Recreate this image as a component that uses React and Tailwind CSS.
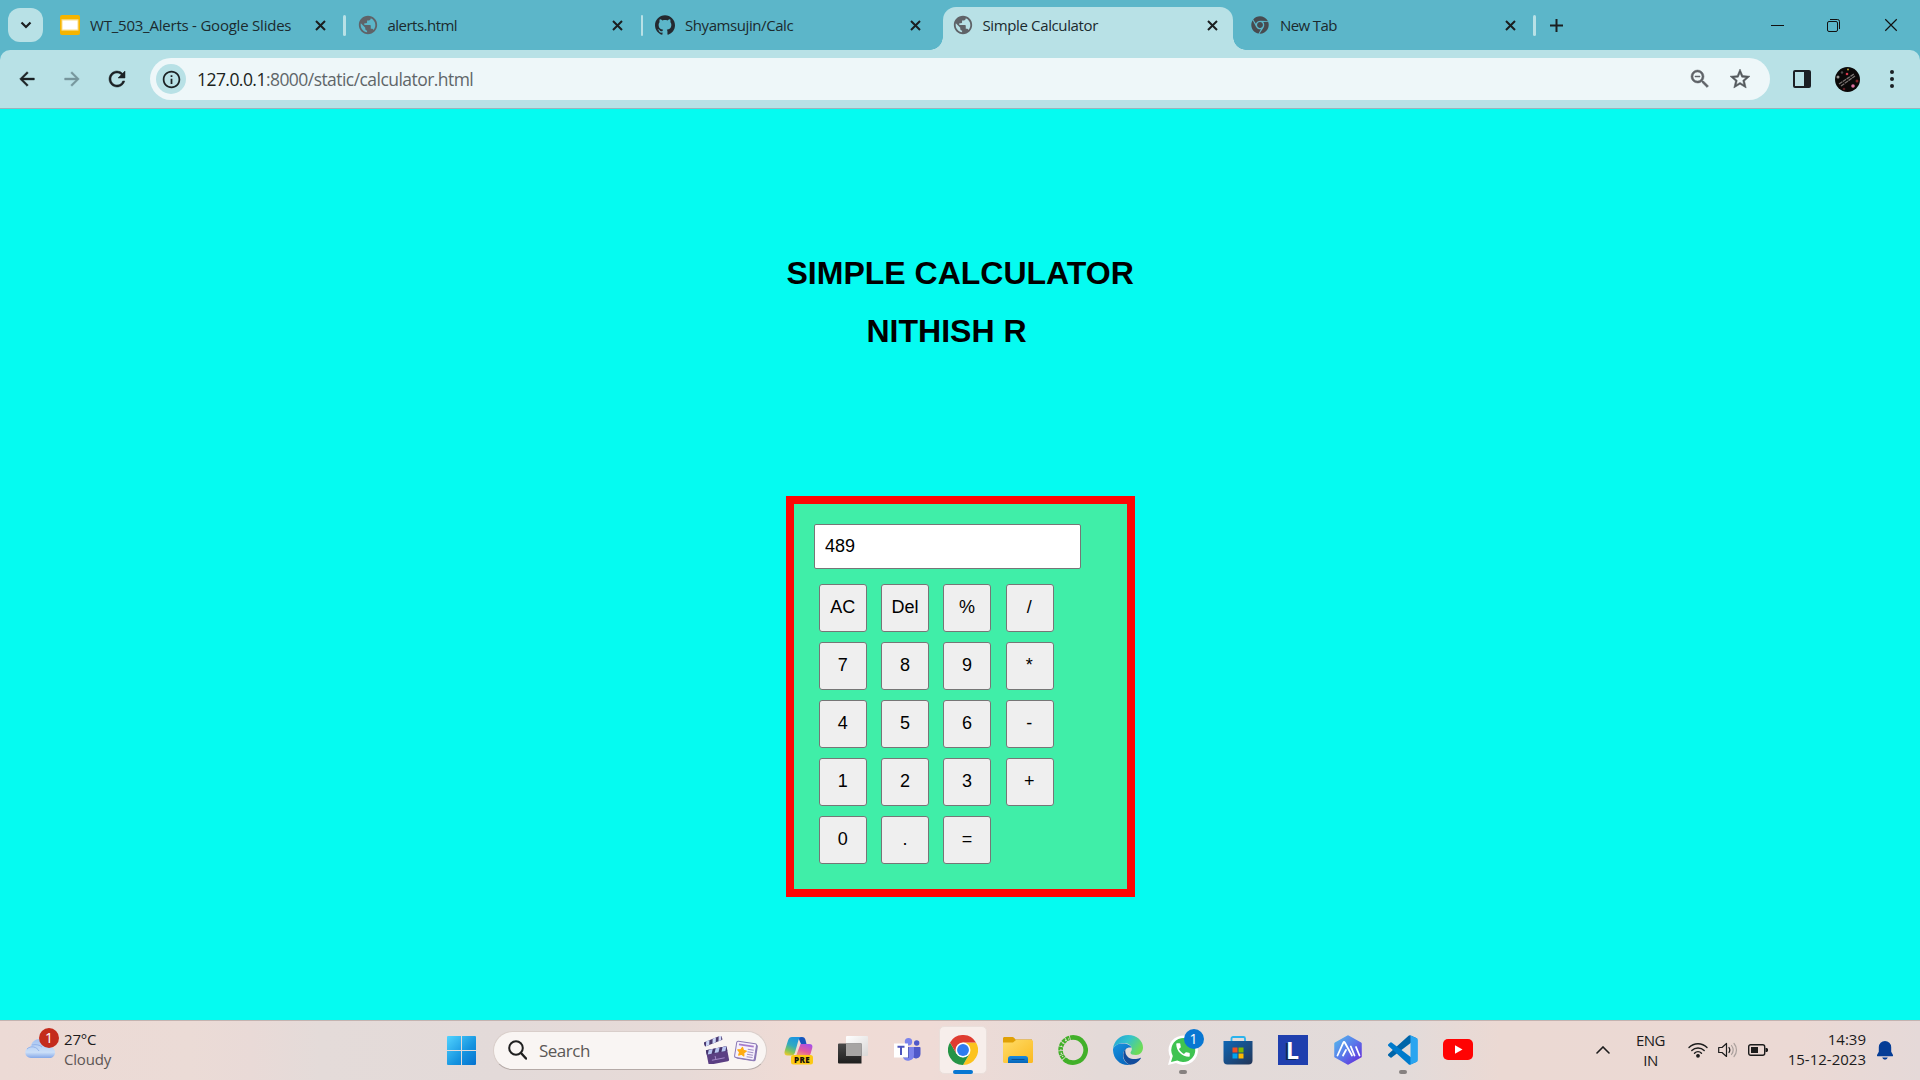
import React from "react";
import {
  MdPublic,
  MdArrowBack,
  MdArrowForward,
  MdRefresh,
  MdOutlineInfo,
  MdStarBorder,
  MdZoomOut,
  MdPhone,
} from "react-icons/md";
import { SiGithub } from "react-icons/si";
import { FaChrome } from "react-icons/fa";

const UI = "font-['Open_Sans','Noto_Sans',sans-serif]";
const HEAVY = "stroke-current [stroke-width:0.5] [&_path[fill=none]]:stroke-none";

function Cross({ size = 11, stroke = 2, color = "#1b1f20" }) {
  return (
    <svg width={size} height={size} viewBox="0 0 11 11" className="block">
      <path d="M1 1 10 10M10 1 1 10" stroke={color} strokeWidth={stroke} fill="none" />
    </svg>
  );
}

function SlidesIcon() {
  return (
    <svg width="20" height="20" viewBox="0 0 20 20">
      <rect width="20" height="20" rx="2" fill="#f5b400" />
      <rect x="1.5" y="4.2" width="17" height="11.5" fill="#fbdc84" />
      <rect x="2.5" y="5.5" width="15" height="9" fill="#fff" />
    </svg>
  );
}

const TABS = [
  { title: "WT_503_Alerts - Google Slides", icon: <SlidesIcon />, tracking: "tracking-[-0.22px]", sep: true },
  { title: "alerts.html", icon: <MdPublic size={22} color="#5f6368" />, tracking: "tracking-[-0.52px]", sep: true },
  { title: "Shyamsujin/Calc", icon: <SiGithub size={20} color="#24292f" />, tracking: "tracking-[-0.42px]" },
  { title: "Simple Calculator", icon: <MdPublic size={22} color="#5f6368" />, tracking: "tracking-[-0.37px]", active: true },
  { title: "New Tab", icon: <FaChrome size={18} color="#474b50" />, tracking: "tracking-[-0.6px]", sep: true },
];

function Tab({ tab }) {
  return (
    <div className="relative flex h-[50px] w-[297.5px] shrink-0 items-center">
      {tab.active && (
        <>
          <div className="absolute top-[7px] left-[3.5px] h-[43px] w-[290px] rounded-t-[13px] bg-[#b8e1e6]" />
          <div className="absolute bottom-0 left-[-9.5px] h-[13px] w-[13px] bg-[radial-gradient(circle_at_0_0,transparent_12.5px,#b8e1e6_13px)]" />
          <div className="absolute bottom-0 left-[293.5px] h-[13px] w-[13px] bg-[radial-gradient(circle_at_100%_0,transparent_12.5px,#b8e1e6_13px)]" />
        </>
      )}
      <div className="relative ml-[11px] flex w-6 justify-center">{tab.icon}</div>
      <span className={`relative ml-2 w-[222px] whitespace-nowrap text-[15px] leading-5 text-[#1b2a2e] ${tab.tracking}`}>
        {tab.title}
      </span>
      <div className="relative ml-[2.5px]">
        <Cross />
      </div>
      {tab.sep && <div className="absolute top-[15px] right-[-1px] h-[21px] w-[2.5px] rounded bg-[#b8e1e6]" />}
    </div>
  );
}

function TabStrip() {
  return (
    <div className="flex h-[50px] items-center bg-[#5cb6c9]">
      <div className="ml-2 flex h-[34px] w-[35px] items-center justify-center rounded-xl bg-[#b8e1e6]">
        <svg width="12" height="8" viewBox="0 0 12 8">
          <path d="M1.5 1.5 6 6l4.500-4.500" fill="none" stroke="#1b1f20" strokeWidth="2.200" />
        </svg>
      </div>
      <div className="ml-1 flex">
        {TABS.map((t) => (
          <Tab key={t.title} tab={t} />
        ))}
      </div>
      <svg className="ml-[15px]" width="13" height="13" viewBox="0 0 13 13">
        <path d="M6.5 0v13M0 6.500h13" stroke="#1b1f20" strokeWidth="2" />
      </svg>
      <svg className="mr-[43px] ml-auto" width="13" height="13" viewBox="0 0 13 13">
        <path d="M0 6.500h13" stroke="#111" strokeWidth="1" />
      </svg>
      <svg className="mr-[44px]" width="13" height="13" viewBox="0 0 13 13" fill="none" stroke="#111">
        <rect x=".5" y="2.500" width="10" height="10" rx="1.500" />
        <path d="M3 .5h7.500a2 2 0 0 1 2 2V10" />
      </svg>
      <div className="mr-[22px]">
        <Cross size={14} stroke={0.9} color="#111" />
      </div>
    </div>
  );
}

function Avatar() {
  return (
    <svg width="25" height="25" viewBox="0 0 25 25">
      <circle cx="12.500" cy="12.500" r="12.500" fill="#0a0808" />
      <path d="M4 17 19 7M6 19 20 9" stroke="#77716f" strokeWidth="1.300" strokeDasharray="4 .6" />
      <circle cx="12" cy="7" r="1.300" fill="#d9364a" />
      <circle cx="3" cy="10" r="1.500" fill="#9a9694" />
      <circle cx="13" cy="2.500" r="1" fill="#b79c3a" />
      <circle cx="22" cy="14" r="1.500" fill="#7e2028" />
      <circle cx="18" cy="19" r="1.800" fill="#dd6f9f" />
      <circle cx="9" cy="22" r="1.300" fill="#5b1a20" />
      <circle cx="7" cy="5.500" r="1.200" fill="#4d4a4a" />
    </svg>
  );
}

function Toolbar() {
  return (
    <div className="bg-[#5cb6c9]">
      <div className="flex h-[59px] items-center rounded-t-[10px] border-b border-[#98b4bb] bg-[#b8e1e6] text-[#1b2124]">
        <MdArrowBack size={22} className={`ml-4 ${HEAVY}`} />
        <MdArrowForward size={22} className={`ml-[23px] text-[#76969c] ${HEAVY}`} />
        <MdRefresh size={24} className={`ml-[22px] ${HEAVY}`} />
        <div className="ml-[21px] flex h-[42px] w-[1620px] items-center rounded-full bg-[#eef7f9]">
          <div className="ml-[6px] flex h-[30px] w-[30px] items-center justify-center rounded-full bg-[#b8e1e6]">
            <MdOutlineInfo size={21} />
          </div>
          <span className="ml-[11px] text-[17.500px] leading-6 tracking-[-0.550px] text-[#5f6669]">
            <span className="text-[#1b1f20]">127.0.0.1</span>:8000/static/calculator.html
          </span>
          <MdZoomOut size={24} className={`ml-auto text-[#5f6368] ${HEAVY}`} />
          <MdStarBorder size={24} className={`mr-[18px] ml-[16px] text-[#53585c] ${HEAVY}`} />
        </div>
        <svg className="ml-[23px]" width="18" height="18" viewBox="0 0 18 18">
          <rect x="1" y="1" width="16" height="16" rx="1" fill="none" stroke="#1b1f24" strokeWidth="2" />
          <path d="M11 1h6v16h-6z" fill="#1b1f24" />
        </svg>
        <div className="ml-[24px]">
          <Avatar />
        </div>
        <svg className="ml-[29px]" width="6" height="20" viewBox="0 0 6 20" fill="#1b1f24">
          <circle cx="3" cy="3" r="2" />
          <circle cx="3" cy="10" r="2" />
          <circle cx="3" cy="17" r="2" />
        </svg>
      </div>
    </div>
  );
}

const KEYS = ["AC", "Del", "%", "/", "7", "8", "9", "*", "4", "5", "6", "-", "1", "2", "3", "+", "0", ".", "="];

function Calculator() {
  return (
    <main className="flex h-[911px] flex-col items-start bg-[#05fbf1] pt-[146px] font-['Liberation_Sans',Arial,sans-serif] text-black">
      <h1 className="ml-[786.500px] text-[32px] leading-[36px] font-bold whitespace-nowrap">SIMPLE CALCULATOR</h1>
      <h1 className="mt-[22px] ml-[866.500px] text-[32px] leading-[36px] font-bold whitespace-nowrap">NITHISH R</h1>
      <section className="mt-[147px] ml-[786px] h-[401px] w-[349px] border-8 border-[#ff0505] bg-[#40eea8] pt-5 pl-5">
        <input
          readOnly
          value="489"
          className="block h-[45px] w-[267px] rounded-[2px] border border-[#767676] bg-white px-[10px] text-[18px] outline-none"
        />
        <div className="mt-[15px] ml-[5px] grid w-[236px] grid-cols-[repeat(4,48px)] gap-x-[14.200px] gap-y-[10px]">
          {KEYS.map((k) => (
            <button key={k} className="h-12 w-12 rounded-[3px] border border-[#767676] bg-[#efefef] pr-[0.500px] pb-px text-[18px]">
              {k}
            </button>
          ))}
        </div>
      </section>
    </main>
  );
}

function CloudIcon() {
  return (
    <svg width="30" height="22" viewBox="0 0 30 22">
      <defs>
        <linearGradient id="cl" x1="0" y1="0" x2="0" y2="1">
          <stop offset="0" stopColor="#a5c2f1" />
          <stop offset=".7" stopColor="#cbdff8" />
          <stop offset="1" stopColor="#85a8e8" />
        </linearGradient>
      </defs>
      <path d="M6 21a5.500 5.500 0 0 1-.5-11C6.500 5 10 2 14.500 2c5 0 8 3.500 8.500 7.500 4 0 7 2 7 6 0 3.500-2.500 5.500-5.500 5.500z" fill="url(#cl)" />
      <path d="M2 12c4-4 10-2 12 2M7 8c4-1 8 0 10 2" fill="none" stroke="#8daee6" strokeWidth=".9" />
    </svg>
  );
}

function StartIcon() {
  return (
    <svg width="29" height="29" viewBox="0 0 29 29">
      <defs>
        <linearGradient id="win" x1="0" y1="0" x2="1" y2="1">
          <stop offset="0" stopColor="#51d3ff" />
          <stop offset=".6" stopColor="#1593df" />
          <stop offset="1" stopColor="#0472d0" />
        </linearGradient>
      </defs>
      <path
        fill="url(#win)"
        d="M1 0h13v14H0V1a1 1 0 0 1 1-1zM15 0h13a1 1 0 0 1 1 1v13H15zM0 15h14v14H1a1 1 0 0 1-1-1zM15 15h14v13a1 1 0 0 1-1 1H15z"
      />
    </svg>
  );
}

function ClapperIcon() {
  return (
    <svg width="26" height="28" viewBox="0 0 26 28">
      <g transform="rotate(-22 2 13)">
        <rect x="2" y="6" width="19" height="4.500" rx="1" fill="#4b3a72" />
        <path d="m5 6 3.500 0-2 4.500H3zM12 6h3.500l-2 4.500H10zM18.500 6H21l-1.500 4.500h-3z" fill="#cdd7f7" />
      </g>
      <g transform="rotate(-11 14 19)">
        <rect x="3" y="12" width="21" height="15" rx="1.500" fill="#5b3f83" />
        <rect x="3" y="12" width="21" height="4.500" fill="#45356c" />
        <path d="m6 12h4l-2 4.500H4zM13 12h4l-2 4.500h-4zM20 12h4l-2 4.500h-4z" fill="#b9c5f1" />
        <path d="M7 23h13M11 19.500v3.500" stroke="#a68bcb" strokeWidth=".9" />
      </g>
    </svg>
  );
}

function NewsIcon() {
  return (
    <svg width="24" height="22" viewBox="0 0 24 22">
      <g transform="rotate(9 12 11)">
        <rect x="3" y="3" width="20" height="17" rx="2" fill="#8b76b8" />
        <rect x="1.500" y="2.500" width="20" height="16.500" rx="1.500" fill="#f7f1fc" stroke="#8a79b5" />
        <path d="M4 5.500h15" stroke="#a77ccc" strokeWidth="1.800" />
        <path d="M13.500 9h6M13.500 11.500h6M13.500 14h6M13.500 16.500h6" stroke="#a18fc4" strokeWidth="1" />
        <path d="m8 8 1.300 2.700 3 .4-2.200 2.100.5 3L8 14.800l-2.600 1.400.5-3-2.200-2.100 3-.4z" fill="#ffac12" stroke="#ffac12" strokeWidth="1.200" strokeLinejoin="round" />
      </g>
    </svg>
  );
}

function CopilotIcon() {
  return (
    <svg width="30" height="28" viewBox="0 0 30 28">
      <defs>
        <linearGradient id="cpA" x1=".6" y1="0" x2=".2" y2="1">
          <stop offset="0" stopColor="#1c95e0" />
          <stop offset=".45" stopColor="#31aac0" />
          <stop offset=".75" stopColor="#7fc35c" />
          <stop offset="1" stopColor="#eac92c" />
        </linearGradient>
        <linearGradient id="cpB" x1=".8" y1="0" x2=".3" y2="1">
          <stop offset="0" stopColor="#a550ea" />
          <stop offset=".6" stopColor="#e45a9d" />
          <stop offset="1" stopColor="#f49a73" />
        </linearGradient>
      </defs>
      <path d="M14 0h4c2 0 3 1 3.500 3l1 4H17z" fill="#1655bd" />
      <path d="M16.500 7H25c3 0 4 1.500 3.200 4.200L26.500 17c-.7 1.500-1.500 2-3 2H12z" fill="url(#cpB)" />
      <path d="M8 0h10c-2 0-3 1.500-3.500 3L11 15.500c-.7 2-1.500 3-4 3H3.500C.8 18.500 0 16.500.7 14L4 3.500C4.800 1 6 0 8 0z" fill="url(#cpA)" />
      <rect x="7" y="18" width="22" height="9.500" rx="2.500" fill="#fcc914" />
      <text x="18" y="25.800" textAnchor="middle" fontSize="8" fontWeight="800" letterSpacing=".4" fontFamily="Open Sans, sans-serif" fill="#16110a">
        PRE
      </text>
    </svg>
  );
}

function TaskViewIcon() {
  return (
    <svg width="30" height="30" viewBox="0 0 30 30">
      <defs>
        <linearGradient id="tvD" x1="0" y1="0" x2="0" y2="1">
          <stop offset="0" stopColor="#494949" />
          <stop offset="1" stopColor="#1e1e1e" />
        </linearGradient>
        <linearGradient id="tvL" x1="0" y1="0" x2="1" y2="1">
          <stop offset="0" stopColor="#fff" />
          <stop offset="1" stopColor="#d9d7d6" />
        </linearGradient>
      </defs>
      <rect x="8" y="1" width="22" height="20" rx="1" fill="url(#tvL)" />
      <path d="M1 8.500h22.500v20H1a1 1 0 0 1-1-1V9.500a1 1 0 0 1 1-1z" fill="url(#tvD)" />
      <path d="M8 8.500h15.500V21H8z" fill="#a7a5a4" />
    </svg>
  );
}

function TeamsIcon() {
  return (
    <svg width="27" height="25" viewBox="0 0 27 25">
      <circle cx="14.500" cy="3.700" r="3.700" fill="#7b83eb" />
      <circle cx="22.700" cy="5" r="2.700" fill="#5059c9" />
      <path d="M18 9h7.500c.6 0 1 .4 1 1v6a4.500 4.500 0 0 1-8.500 2z" fill="#5059c9" />
      <path d="M9 9h11v8a5.800 5.800 0 0 1-11 2.500z" fill="#7b83eb" />
      <path d="M15 9v11H9V9z" fill="#434b9c" opacity=".6" />
      <rect y="5.500" width="14" height="14" fill="#fff" />
      <path d="M3.500 8.800h7M7 8.500v8.500" stroke="#4b53bc" strokeWidth="2" fill="none" />
    </svg>
  );
}

function ChromeIcon() {
  return (
    <svg width="30" height="30" viewBox="0 0 48 48">
      <path d="M24 12h20.800A24 24 0 0 1 24 48l10.400-18z" fill="#fcc31e" />
      <path d="M3.200 12 13.600 30 24 36l10.400-6L24 48A24 24 0 0 1 3.200 12z" fill="#259445" />
      <path d="M3.200 12A24 24 0 0 1 44.800 12H24l-10.400 8v10z" fill="#df3b30" />
      <circle cx="24" cy="24" r="12" fill="#fff" />
      <circle cx="24" cy="24" r="9.500" fill="#2f7cf0" />
    </svg>
  );
}

function FolderIcon() {
  return (
    <svg width="30" height="26" viewBox="0 0 30 26">
      <defs>
        <linearGradient id="fo" x1="0" y1="0" x2="1" y2="1">
          <stop offset="0" stopColor="#ffdc68" />
          <stop offset="1" stopColor="#fbb91f" />
        </linearGradient>
        <linearGradient id="fb" x1="0" y1="0" x2="0" y2="1">
          <stop offset="0" stopColor="#198ae0" />
          <stop offset="1" stopColor="#0565b8" />
        </linearGradient>
      </defs>
      <path d="M1.500 0h8c1 0 2 1 3 2.500H29V8H0V1.500C0 .6.600 0 1.500 0z" fill="#e0a005" />
      <path d="M0 5.500h10L13 3h15.500c.8 0 1.500.6 1.500 1.500v20c0 .8-.6 1.500-1.500 1.500h-27C.6 26 0 25.400 0 24.500z" fill="url(#fo)" />
      <path d="M5 26v-4.500c0-1.500 1-2.500 2.500-2.500h15c1.500 0 2.500 1 2.500 2.500V26z" fill="url(#fb)" />
      <path d="M9 22.500h12" stroke="#0a4f92" strokeWidth="1.200" strokeLinecap="round" />
    </svg>
  );
}

function AnacondaIcon() {
  return (
    <svg width="30" height="30" viewBox="0 0 30 30" fill="none" stroke="#42b029">
      <path d="M15 2.400A12.600 12.600 0 1 1 7 24.700" strokeWidth="4.600" />
      <path d="M9 26A12.600 12.600 0 0 1 15 2.400" strokeWidth="4.600" strokeDasharray="3.600 .7" />
      <path d="M5 22A12 12 0 0 1 12 3.500" strokeWidth="1.200" stroke="#e8dbd7" strokeDasharray="1.200 2.300" />
    </svg>
  );
}

function EdgeIcon() {
  return (
    <svg width="30" height="30" viewBox="0 0 30 30">
      <defs>
        <linearGradient id="edA" x1="0" y1="0" x2="1" y2=".5">
          <stop offset="0" stopColor="#229fd5" />
          <stop offset=".5" stopColor="#33c2ce" />
          <stop offset="1" stopColor="#6ddc58" />
        </linearGradient>
        <linearGradient id="edB" x1="0" y1="0" x2=".6" y2="1">
          <stop offset="0" stopColor="#1794e0" />
          <stop offset="1" stopColor="#0967bd" />
        </linearGradient>
      </defs>
      <path d="M0 14C.8 6 7 0 15.200 0 24 0 30 6 30 12.500c0 4.500-3 7.500-7 7.500-3.500 0-5.500-1-5.500-2.300 0-1 1.300-1.700 1.300-3.700 0-3-3-6-8-6C5.500 8 1.500 10.500 0 14z" fill="url(#edA)" />
      <path d="M0 14c1.500-3.500 5-5.500 9.500-5.500 5 0 8.300 2 9 4.200-3-1.200-8 1-8.500 7C9.700 25 13 28.500 17 30h-2C6.500 30-.3 23 0 14z" fill="url(#edB)" />
      <path d="M13.200 13c-4.500 4-4.200 13.500 3.600 16.800 4 .2 8.500-2.300 11-6.200.3-.6-.2-1-.8-.6-5 2.300-14 1.500-14.700-6.500-.1-1.500.3-2.800.9-3.500z" fill="#124c9c" />
    </svg>
  );
}

function WhatsAppIcon() {
  return (
    <div className="relative h-[30px] w-[30px]">
      <svg width="30" height="30" viewBox="0 0 30 30">
        <path d="M0 30l2.200-8A14.700 14.700 0 1 1 8 28z" fill="#fff" />
        <path d="M3 27l1.800-6A12 12 0 1 1 9.300 25.500z" fill="#3fc351" />
      </svg>
      <MdPhone size={18} color="#fff" className="absolute top-[6px] left-[6px]" />
      <span className="absolute -top-[6px] left-[16px] flex h-5 w-5 items-center justify-center rounded-full bg-[#0877d2] text-[14px] text-white">
        1
      </span>
    </div>
  );
}

function StoreIcon() {
  return (
    <svg width="30" height="30" viewBox="0 0 30 30">
      <defs>
        <linearGradient id="st" x1="0" y1="0" x2="1" y2="1">
          <stop offset="0" stopColor="#0f67b5" />
          <stop offset="1" stopColor="#233557" />
        </linearGradient>
      </defs>
      <path d="M8.500 7V3.500c0-1 .7-1.500 1.500-1.500h10.500c.8 0 1.500.6 1.500 1.500V7" fill="none" stroke="#2bb3ec" strokeWidth="1.800" />
      <path d="M.5 6h29v19.500a4 4 0 0 1-4 4h-21a4 4 0 0 1-4-4z" fill="url(#st)" />
      <path d="M9.500 12.500h5v5h-5z" fill="#f25022" />
      <path d="M15.500 12.500h5v5h-5z" fill="#7fba00" />
      <path d="M9.500 18.500h5v5h-5z" fill="#00a4ef" />
      <path d="M15.500 18.500h5v5h-5z" fill="#ffb900" />
    </svg>
  );
}

function LIcon() {
  return (
    <div className="flex h-[30px] w-[30px] items-center justify-center bg-[#1f3fae]">
      <span className="font-['Open_Sans',sans-serif] text-[23px] leading-none font-bold text-white [text-shadow:-2px_1px_0_#0d2856]">L</span>
    </div>
  );
}

function HexIcon() {
  return (
    <svg width="28" height="30" viewBox="0 0 28 30">
      <defs>
        <linearGradient id="hx" x1="0" y1="0" x2="1" y2="1">
          <stop offset="0" stopColor="#55b8ec" />
          <stop offset=".5" stopColor="#5a78ea" />
          <stop offset="1" stopColor="#6527d9" />
        </linearGradient>
      </defs>
      <path d="M14 1.500 26.500 8.500v13L14 28.500 1.500 21.500v-13z" fill="url(#hx)" stroke="url(#hx)" strokeWidth="2.500" strokeLinejoin="round" />
      <path d="M3.500 20.500 9.200 7.800Q10 6.200 10.900 7.800L18 20.500M9 20.500l3-5.500M16.800 11.500 20.500 20.500M22 12l3.500 8.500" fill="none" stroke="#fff" strokeWidth="1.800" strokeLinejoin="round" strokeLinecap="round" />
    </svg>
  );
}

function VsCodeIcon() {
  return (
    <svg width="30" height="30" viewBox="0 0 100 100">
      <path d="M96 11 75.500 1.300a6.200 6.200 0 0 0-7 1.200L1.300 63.500a4 4 0 0 0 0 6l5.500 5a4 4 0 0 0 5.300.3L93 13.600c2.700-2 6.600 0 6.600 3.300v-.2A6 6 0 0 0 96 11z" fill="#0065a9" />
      <path d="M96 89 75.500 98.700a6.200 6.200 0 0 1-7-1.200L1.300 36.500a4 4 0 0 1 0-6l5.500-5a4 4 0 0 1 5.300-.3L93 86.400c2.700 2 6.600 0 6.600-3.300v.2A6 6 0 0 1 96 89z" fill="#007acc" />
      <path d="M75.500 98.700a6.200 6.200 0 0 1-7-1.200c2.200 2.300 6.500.7 6.500-2.500V5c0-3.200-4-4.800-6.300-2.500a6.200 6.200 0 0 1 7-1.200L96 11a6 6 0 0 1 3.500 5.600v66.800A6 6 0 0 1 96 89z" fill="#2aa5f0" />
    </svg>
  );
}

function YouTubeIcon() {
  return (
    <svg width="30" height="21" viewBox="0 0 30 21">
      <rect width="30" height="21" rx="5" fill="#ff0303" />
      <path d="M12 6.200v8.600l7.500-4.300z" fill="#fff" />
    </svg>
  );
}

const APPS = [
  { id: "copilot", icon: <div className="mt-[2px] ml-[2px]"><CopilotIcon /></div> },
  { id: "taskview", icon: <TaskViewIcon /> },
  { id: "teams", icon: <TeamsIcon /> },
  { id: "chrome", icon: <ChromeIcon />, active: true },
  { id: "files", icon: <FolderIcon /> },
  { id: "anaconda", icon: <AnacondaIcon /> },
  { id: "edge", icon: <EdgeIcon /> },
  { id: "whatsapp", icon: <WhatsAppIcon />, running: true },
  { id: "store", icon: <StoreIcon /> },
  { id: "l", icon: <LIcon /> },
  { id: "hex", icon: <HexIcon /> },
  { id: "vscode", icon: <VsCodeIcon />, running: true },
  { id: "youtube", icon: <div className="pb-px"><YouTubeIcon /></div> },
];

function Taskbar() {
  return (
    <footer className="flex h-[60px] items-center border-t border-[#c3b3b0] bg-[linear-gradient(90deg,#ecdad5_0,#ebdbd6_190px,#e9dad7_250px,#e4dbd9_320px,#e3dad9_500px,#e7dad7_680px,#efdbd5_800px,#efdbd6_930px,#e4dad8_1100px,#e2dbda_1400px,#ebd9d3_1500px,#ebd9d4_1800px,#e5d9d8_1920px)] pb-px text-[15px] leading-5 text-[#1c1c1c]">
      <div className="relative ml-[25px] w-[30px] pt-[2px]">
        <div className="-mt-[7px]">
          <CloudIcon />
        </div>
        <span className="absolute -top-[14px] left-[14px] flex h-5 w-5 items-center justify-center rounded-full bg-[#c42b1c] text-[14px] text-white">
          1
        </span>
      </div>
      <div className="ml-[9px] w-[100px] pb-[3px] tracking-[-0.200px]">
        <div>27°C</div>
        <div className="text-[#5d5654]">Cloudy</div>
      </div>
      <div className="ml-[283px]">
        <StartIcon />
      </div>
      <div className="ml-[17px] flex h-[39px] w-[274px] items-center rounded-full border border-[#d9ceca] border-b-[#b5aaa7] bg-[#f9f5f3]">
        <svg className="ml-[14px]" width="19" height="20" viewBox="0 0 19 20">
          <circle cx="8" cy="8" r="6.800" fill="none" stroke="#1f1f1f" strokeWidth="2" />
          <path d="m13 13 5 5.500" stroke="#1f1f1f" strokeWidth="2.400" strokeLinecap="round" />
        </svg>
        <span className="ml-[12px] pt-[2px] text-[17px] tracking-[-0.500px] text-[#5c5856]">Search</span>
        <div className="ml-auto">
          <ClapperIcon />
        </div>
        <div className="mr-[8px] ml-[4px] pt-[2px]">
          <NewsIcon />
        </div>
      </div>
      <div className="ml-[3px] flex">
        {APPS.map((a) => (
          <div key={a.id} className="relative flex h-[58px] w-[55px] items-center justify-center">
            {a.active && <div className="absolute top-[5px] left-[3.500px] h-[48px] w-[48px] rounded-[5px] border border-[#eadfdb] bg-[#f7eeeb]" />}
            <div className="relative flex">{a.icon}</div>
            {a.active && <div className="absolute bottom-[5.500px] left-[17.500px] h-[4px] w-5 rounded-full bg-[#0877d2]" />}
            {a.running && <div className="absolute bottom-[5.500px] left-[23.500px] h-[4px] w-2 rounded-full bg-[#868180]" />}
          </div>
        ))}
      </div>
      <svg className="ml-[110.500px]" width="14" height="8" viewBox="0 0 14 8">
        <path d="M1 7 7 1l6 6" fill="none" stroke="#1c1c1c" strokeWidth="1.600" strokeLinecap="round" />
      </svg>
      <div className="ml-[21px] w-[40px] text-center tracking-[-0.500px]">
        <div>ENG</div>
        <div>IN</div>
      </div>
      <svg className="ml-[17px]" width="20" height="16" viewBox="0 0 20 16" fill="none" stroke="#1c1c1c" strokeWidth="1.400" strokeLinecap="round">
        <path d="M1 5.500a12.700 12.700 0 0 1 18 0M3.800 8.500a8.800 8.800 0 0 1 12.400 0M6.500 11.200a5 5 0 0 1 7 0" />
        <circle cx="10" cy="13.800" r="1.200" fill="#1c1c1c" />
      </svg>
      <svg className="ml-[10px]" width="20" height="18" viewBox="0 0 20 18" fill="none" stroke="#1c1c1c" strokeWidth="1.200" strokeLinecap="round" strokeLinejoin="round">
        <path d="M.7 6.500H4L8.500 2.500v13L4 11.500H.7z" />
        <path d="M11 6.500c1 1.500 1 3.500 0 5" />
        <path d="M13.500 4.500c2 2.700 2 6.300 0 9M16 2.500c3.300 3.700 3.300 9.300 0 13" stroke="#aaa09d" />
      </svg>
      <svg className="ml-[10px]" width="20" height="12" viewBox="0 0 20 12">
        <rect x=".7" y=".7" width="16" height="10.600" rx="2" fill="none" stroke="#1c1c1c" strokeWidth="1.400" />
        <rect x="3" y="3" width="7" height="6" fill="#1c1c1c" />
        <path d="M17.500 4h1.500l1 1v2l-1 1h-1.500z" fill="#1c1c1c" />
      </svg>
      <div className="ml-auto pb-[3px] text-right">
        <div>14:39</div>
        <div>15-12-2023</div>
      </div>
      <svg className="mr-[27px] ml-[11px]" width="16" height="19" viewBox="0 0 16 19" fill="#053d96">
        <path d="M8 0a6.200 6.200 0 0 1 6.200 6.200v4.500L16 14c.2.700-.2 1.200-.8 1.200H.8C.200 15.200-.2 14.700 0 14l1.800-3.300V6.200A6.200 6.200 0 0 1 8 0zM5.200 16.500h5.600a2.900 2.900 0 0 1-5.600 0z" />
      </svg>
    </footer>
  );
}

export default function App() {
  return (
    <div className={`h-[1080px] w-[1920px] overflow-hidden ${UI}`}>
      <TabStrip />
      <Toolbar />
      <Calculator />
      <Taskbar />
    </div>
  );
}
